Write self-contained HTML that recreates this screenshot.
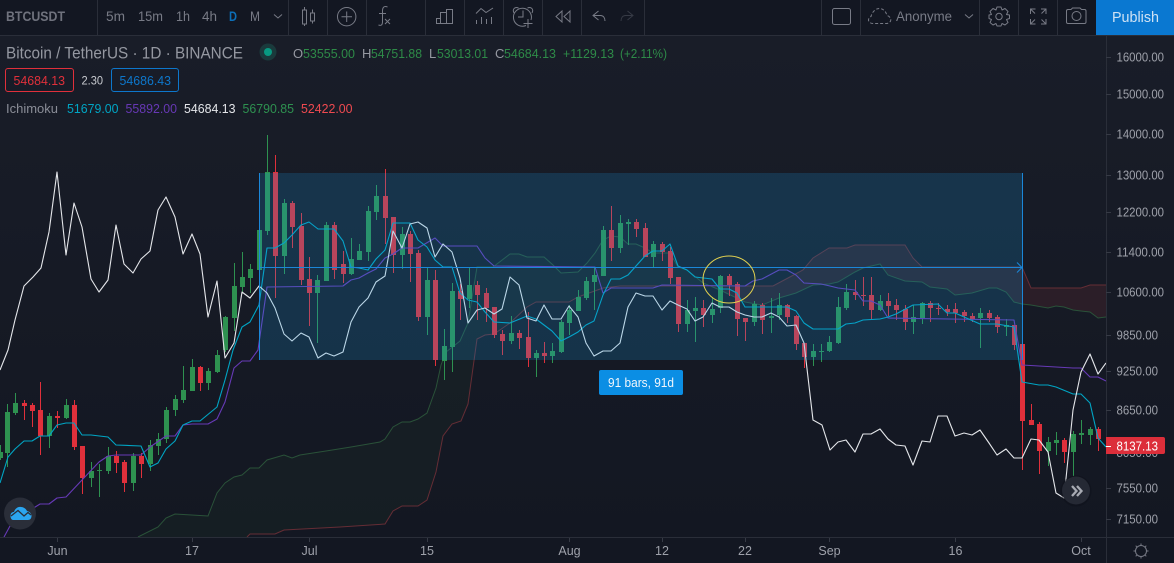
<!DOCTYPE html>
<html><head><meta charset="utf-8"><style>
html,body{margin:0;padding:0;background:#131722;width:1174px;height:563px;overflow:hidden}
svg{display:block;font-family:"Liberation Sans",sans-serif}
</style></head><body>
<svg width="1174" height="563" viewBox="0 0 1174 563" xmlns="http://www.w3.org/2000/svg">
<defs>
<linearGradient id="bg" x1="0" y1="0" x2="0" y2="1"><stop offset="0" stop-color="#191d28"/><stop offset="1" stop-color="#131722"/></linearGradient>
<clipPath id="ch"><rect x="0" y="36" width="1106" height="501"/></clipPath>
</defs>
<rect width="1174" height="563" fill="#131722"/>
<rect x="0" y="36" width="1174" height="501" fill="url(#bg)"/>

<g clip-path="url(#ch)">
<!-- cloud -->
<polygon fill="#4caf50" fill-opacity=".045" points="138,537 158,527 166,518 175,514 208,516 217,493 225,483 234,477 242,475 250,468 259,468 267,460 284,455 292,458 300,455 326,451 351,447 380,442 385,439 393,427 402,422 410,422 418,419 427,413 436,388 441,365 446,352 460,341 468,323 477,267 493,267 510,254 519,254 527,257 544,257 553,265 561,273 578,272 587,263 595,253 603,240 611,236 620,237 628,244 636,244 645,248 653,253 670,253 678,267 687,270 697,278 703,283 711,286 620,286 603,288 578,297 569,302 536,302 527,307 510,323 494,334 485,335 477,339 468,404 461,421 452,424 443,436 436,472 427,500 418,506 402,506 393,511 385,524 340,527 284,530 275,534 250,534 247,537"/>
<polygon fill="#ff5252" fill-opacity=".09" points="711,286 773,286 788,278 803,270 813,258 829,248 847,248 855,245 905,245 913,258 922,267 1022,267 1031,288 1081,288 1090,285 1106,285 1106,317 1098,318 1090,312 1081,311 1073,310 1064,307 1056,306 1048,308 1031,305 1022,304 1014,302 1006,292 997,288 989,288 972,293 955,295 947,289 930,287 922,282 905,281 888,275 880,264 863,268 855,272 838,282 829,284 813,285 796,293 779,298 762,305 745,302 720,290"/>
<polyline fill="none" stroke="#2a5239" stroke-width="1" points="138,537 158,527 166,518 175,514 208,516 217,493 225,483 234,477 242,475 250,468 259,468 267,460 284,455 292,458 300,455 326,451 351,447 380,442 385,439 393,427 402,422 410,422 418,419 427,413 436,388 441,365 446,352 460,341 468,323 477,267 493,267 510,254 519,254 527,257 544,257 553,265 561,273 578,272 587,263 595,253 603,240 611,236 620,237 628,244 636,244 645,248 653,253 670,253 678,267 687,270 697,278 703,283 720,290 745,302 762,305 779,298 796,293 813,285 829,284 838,282 855,272 863,268 880,264 888,275 905,281 922,282 930,287 947,289 955,295 972,293 989,288 997,288 1006,292 1014,302 1022,304 1031,305 1048,308 1056,306 1064,307 1073,310 1081,311 1090,312 1098,318 1106,317"/>
<polyline fill="none" stroke="#652d35" stroke-width="1" points="247,537 250,534 275,534 284,530 340,527 385,524 393,511 402,506 418,506 427,500 436,472 443,436 452,424 461,421 468,404 477,339 485,335 494,334 510,323 527,307 536,302 569,302 578,297 603,288 620,286 773,286 788,278 803,270 813,258 829,248 847,248 855,245 905,245 913,258 922,267 1022,267 1031,288 1081,288 1090,285 1106,285"/>

<!-- candles -->
<g shape-rendering="crispEdges" fill="none">
<path stroke="#2e9150" stroke-width="1" d="M.5 445V460M7.5 404V467M15.5 393V415M49.5 413V448M66.5 399V419M91.5 462V487M99.5 464V497M108.5 447V474M133.5 453V491M150.5 440V471M158.5 433V455M166.5 407V443M175.5 395V416M183.5 366V403M192.5 359V391M208.5 368V390M217.5 350V373M225.5 316V352M234.5 263V331M242.5 252V293M250.5 264V293M259.5 230V270M267.5 135V235M284.5 199V274M317.5 275V343M326.5 222V281M351.5 238V275M359.5 244V260M368.5 206V261M376.5 185V220M402.5 227V269M427.5 268V335M444.5 329V380M452.5 283V372M469.5 268V308M511.5 316V344M536.5 350V377M552.5 343V363M561.5 320V353M569.5 305V335M578.5 290V311M586.5 277V300M594.5 268V310M603.5 226V276M620.5 215V253M628.5 219V245M653.5 241V267M687.5 300V332M695.5 297V342M712.5 297V323M720.5 275V313M754.5 301V326M771.5 298V333M779.5 293V320M813.5 344V366M821.5 344V362M829.5 336V352M838.5 297V344M846.5 284V310M880.5 295V311M913.5 305V334M922.5 302V324M980.5 308V348M1006.5 319V336M1048.5 437V466M1056.5 432V455M1073.5 431V476M1081.5 420V444M1090.5 427V445"/>
<path stroke="#2e9150" stroke-width="5" d="M.5 452V458M7.5 412V453M15.5 403V413M49.5 416V436M66.5 405V418M91.5 471V478M108.5 456V471M133.5 456V483M150.5 445V464M158.5 439V446M166.5 410V439M175.5 399V410M183.5 390V400M192.5 367V391M208.5 371V383M217.5 355V372M225.5 317V350M234.5 286V318M242.5 277V287M250.5 269V278M259.5 230V270M267.5 172V231M284.5 203V256M317.5 280V293M326.5 225V281M351.5 259V274M359.5 251V260M368.5 211V252M376.5 196V212M402.5 234V255M427.5 280V317M444.5 346V361M452.5 291V347M469.5 285V299M511.5 333V341M536.5 353V358M552.5 351V356M561.5 322V352M569.5 310V323M578.5 297V311M586.5 281V298M594.5 275V282M603.5 230V276M620.5 223V248M628.5 222V224M653.5 244V257M687.5 310V324M695.5 308V311M712.5 309V315M720.5 276V308M754.5 304V322M771.5 316V318M779.5 305V315M813.5 351V357M821.5 351V352M829.5 342V351M838.5 307V343M846.5 292V308M880.5 301V310M913.5 317V322M922.5 303V318M980.5 313V318M1006.5 325V327M1048.5 442V451M1056.5 440V443M1073.5 434V452M1081.5 433V435M1090.5 429V435M99.5 470V471"/>
<path stroke="#e0303b" stroke-width="1" d="M24.5 400V420M32.5 403V427M40.5 382V455M57.5 411V428M74.5 400V450M82.5 446V494M116.5 451V473M124.5 460V492M141.5 453V478M200.5 366V391M275.5 155V298M292.5 201V248M301.5 213V285M309.5 257V326M334.5 222V279M343.5 251V283M385.5 169V244M393.5 217V273M410.5 231V282M418.5 250V321M435.5 270V366M460.5 284V320M477.5 281V320M486.5 288V322M494.5 307V338M502.5 330V355M519.5 330V349M528.5 312V367M544.5 342V363M611.5 206V261M636.5 219V237M645.5 223V257M662.5 242V261M670.5 247V284M678.5 277V332M703.5 300V327M729.5 274V296M737.5 282V336M745.5 318V341M762.5 303V334M787.5 304V323M796.5 315V350M804.5 343V368M855.5 280V300M863.5 277V306M871.5 277V319M888.5 293V316M896.5 299V320M905.5 305V330M930.5 301V322M938.5 303V315M947.5 305V316M955.5 303V323M964.5 310V322M972.5 313V322M989.5 310V322M997.5 315V333M1014.5 325V350M1022.5 344V470M1031.5 404V425M1039.5 422V474M1064.5 438V463M1098.5 427V451"/>
<path stroke="#e0303b" stroke-width="5" d="M24.5 403V406M32.5 405V411M40.5 410V436M57.5 416V418M74.5 405V447M82.5 446V478M116.5 456V463M124.5 462V483M141.5 456V464M200.5 367V383M275.5 172V256M292.5 203V227M301.5 226V280M309.5 279V293M334.5 225V270M343.5 264V274M385.5 196V218M393.5 217V255M410.5 234V254M418.5 253V317M435.5 280V360M460.5 291V299M477.5 285V295M486.5 293V308M494.5 307V335M502.5 334V341M519.5 333V338M528.5 337V358M544.5 353V356M611.5 230V248M636.5 222V229M645.5 228V257M662.5 244V252M670.5 251V278M678.5 277V324M703.5 308V315M729.5 276V285M737.5 284V319M745.5 318V322M762.5 305V320M787.5 305V317M796.5 316V344M804.5 343V357M855.5 292V295M863.5 295V296M871.5 295V310M888.5 301V306M896.5 305V310M905.5 309V322M930.5 303V308M938.5 308V309M947.5 309V312M955.5 309V313M964.5 312V316M972.5 316V319M989.5 313V318M997.5 317V327M1014.5 325V345M1022.5 344V421M1031.5 420V425M1039.5 424V451M1064.5 440V452M1098.5 429V439"/>
</g>

<!-- base line (purple) -->
<polyline fill="none" stroke="#673ab7" stroke-width="1.1" stroke-linejoin="round" points="4,537 10,526 24,514 40,504 49,504 57,498 66,497 99,462 108,456 116,455 141,455 150,447 166,436 175,436 183,425 192,424 208,424 217,419 225,402 234,368 242,361 250,361 258,350 267,287 343,286 351,280 359,278 368,273 376,269 385,258 393,254 402,248 418,248 435,238 443,246 477,246 485,258 494,266 595,267 603,293 611,288 653,288 662,285 745,286 753,281 762,279 779,270 787,270 796,275 804,283 821,284 830,286 838,288 855,290 863,301 871,301 880,305 888,318 1014,320 1022,365 1039,366 1073,368 1081,368 1090,377 1098,377 1106,381"/>
<!-- conversion line (teal) -->
<polyline fill="none" stroke="#00a5c4" stroke-width="1.1" stroke-linejoin="round" points="0,483 8,457 15,449 24,441 32,441 40,436 49,436 57,425 66,423 74,423 82,435 91,435 108,437 116,445 141,446 150,467 158,463 166,449 175,441 183,425 192,421 200,421 217,407 225,380 233,350 242,327 250,322 259,305 267,248 275,248 284,243 292,235 301,225 309,222 318,229 334,229 343,241 351,267 359,268 368,270 376,259 385,250 393,223 410,223 418,240 427,247 435,260 443,267 452,267 460,293 468,300 477,302 485,312 494,322 510,323 527,316 536,319 544,325 552,331 561,341 569,337 578,332 586,325 594,321 603,295 611,279 620,279 628,275 636,266 645,256 653,251 662,251 670,244 678,266 687,270 695,277 712,279 720,289 729,289 737,293 745,307 787,307 796,311 804,323 813,329 838,329 846,324 855,323 863,320 880,319 888,317 896,314 913,305 938,304 947,313 955,313 980,324 997,324 1014,327 1022,382 1039,385 1048,385 1056,387 1073,394 1081,394 1090,403 1098,438 1106,447"/>
<!-- lagging line (white) -->
<polyline fill="none" stroke="#e4e6ea" stroke-width="1.1" stroke-linejoin="round" points="0,370 8,350 15,320 24,286 33,277 41,268 49,232 57,172 66,255 74,203 82,227 91,279 99,292 108,280 116,225 124,264 133,273 141,259 150,251 158,210 166,197 175,217 183,254 192,234 200,254 208,317 217,281 225,358 234,343 242,292 250,298 259,286 267,293 275,308 284,334 292,341 301,333 309,337 318,358 326,353 334,356 343,352 351,322 359,307 368,298 376,282 385,276 393,231 402,248 410,224 418,222 427,228 435,257 443,244 452,252 460,278 468,323 477,310 485,308 494,314 502,309 510,277 519,285 527,318 536,321 544,305 552,319 561,319 569,306 578,317 586,343 594,356 603,351 611,351 620,343 628,307 636,293 645,296 653,296 662,310 670,301 678,305 687,309 695,321 703,317 712,303 720,307 729,307 737,312 745,315 754,317 762,317 771,313 779,317 787,326 796,325 804,343 813,420 822,425 830,450 838,442 846,440 855,452 863,434 871,434 880,429 888,439 896,445 905,446 913,465 922,441 930,442 938,416 947,416 955,436 964,433 972,435 980,430 989,443 997,455 1006,449 1014,458 1022,458 1031,439 1039,440 1048,452 1056,493 1064,498 1073,410 1081,372 1090,354 1098,374 1106,363"/>
</g>

<!-- measure rect -->
<rect x="259" y="173" width="764" height="187" fill="#1a9ae0" fill-opacity=".2"/>
<g shape-rendering="crispEdges" stroke="#1b87d8" stroke-width="1" fill="none">
<path d="M259.5 173V360M1022.5 173V360M259.5 267.5H1022"/>
</g>
<path d="M1017 262.5L1022 267.5L1017 272.5" fill="none" stroke="#1b87d8" stroke-width="1"/>
<rect x="599" y="370" width="84" height="25" rx="2" fill="#0b8ee4"/>
<text x="608" y="387" font-size="13" fill="#f0f6fc" textLength="66" lengthAdjust="spacingAndGlyphs">91 bars, 91d</text>

<!-- ellipse -->
<ellipse cx="729" cy="279.500" rx="26" ry="23.500" fill="none" stroke="#e3d24f" stroke-width="1"/>

<!-- toolbar -->
<rect x="0" y="0" width="1174" height="35" fill="#131722"/>
<g shape-rendering="crispEdges" stroke="#2a2e39" stroke-width="1" fill="none">
<path d="M0 35.500H1174M97.500 0V35M288.500 0V35M327.500 0V35M366.500 0V35M425.500 0V35M464.500 0V35M503.500 0V35M542.500 0V35M581.500 0V35M644.500 0V35M821.500 0V35M860.500 0V35M979.500 0V35M1018.500 0V35M1057.500 0V35"/>
<path d="M1106.500 36V563M0 537.500H1174"/>
</g>
<rect x="1096" y="0" width="78" height="35" fill="#0a78d1"/>
<text x="1112" y="22" font-size="15" fill="#cfe2f4" textLength="47" lengthAdjust="spacingAndGlyphs">Publish</text>

<g font-size="13.500" fill="#787b86">
<text x="6" y="21" font-size="13.500" font-weight="bold" fill="#6f727d" textLength="59" lengthAdjust="spacingAndGlyphs">BTCUSDT</text>
<text x="106" y="21" textLength="19" lengthAdjust="spacingAndGlyphs">5m</text>
<text x="138" y="21" textLength="25" lengthAdjust="spacingAndGlyphs">15m</text>
<text x="176" y="21" textLength="14" lengthAdjust="spacingAndGlyphs">1h</text>
<text x="202" y="21" textLength="15" lengthAdjust="spacingAndGlyphs">4h</text>
<text x="229" y="21" fill="#0d6fb8" font-weight="bold" textLength="8" lengthAdjust="spacingAndGlyphs">D</text>
<text x="250" y="21" textLength="10" lengthAdjust="spacingAndGlyphs">M</text>
<text x="896" y="21" textLength="56" lengthAdjust="spacingAndGlyphs">Anonyme</text>
</g>

<!-- toolbar icons -->
<g fill="none" stroke="#787b86" stroke-width="1">
<path d="M274 14.500L278 18L282 14.500"/>
<path d="M965 14.500L969 18L973 14.500"/>
<path d="M304.500 7V10M304.500 24V26M302.500 10H306.500V24H302.500ZM312.500 9.500V13M312.500 21V23.500M310.500 13H314.500V21H310.500Z"/>
<circle cx="346.700" cy="16.700" r="9.200"/>
<path d="M346.700 11.500V22M341.500 16.700H352"/>
<path d="M387.500 7C384 5.500 382.500 7.500 382.500 11V22C382.500 25 381 26 378.500 25M379 13.500H386M385 19L390 24M390 19L385 24"/>
<path d="M436.500 23.500V18.500H440.500V23.500ZM440.500 23.500V12.500H446.500V23.500M446.500 23.500V9.500H452.500V23.500ZM436.500 23.500H452.500"/>
<path d="M476 13.500L481 8.500L486 12.500L493 8M476.500 24V20M481.500 24V17M486.500 24V19M491.500 24V17"/>
<path d="M531 20A9 9 0 1 0 526 25.500M523 10.500V17H518M514 13C512 9 515 6.500 518.500 8M532 13C534 9 531 6.500 527.500 8M528 19V28M523.500 23.500H532.500"/>
<path d="M562 11L556 16.500L562 22ZM570 11L564 16.500L570 22Z"/>
<path d="M598.500 11L593 15.500L598.500 20M593 15.500H600.500C603.500 15.500 605 18 605 21"/>
<path d="M627.500 11L633 15.500L627.500 20M633 15.500H625.500C622.500 15.500 621 18 621 21" stroke="#363a45"/>
<rect x="832.500" y="8.500" width="18" height="16" rx="2"/>
<path d="M873 23.500C868 23.500 867 18.500 871 16.500C872 12 876 8 880 8.500C884 9 886 12 887 15.500C891 16.500 893 22 887 23.500Z" stroke-dasharray="3 2"/>
<circle cx="999" cy="16.500" r="3.200"/>
<path d="M997 7H1001L1002 10L1005 8.500L1008 11.500L1006.500 14.500L1009.500 15V18.500L1006.500 19.500L1008 22.500L1005 25L1002 23.500L1001 26H997L996 23.500L993 25L990 22.500L991.500 19.500L989 18.500V15L991.500 14.500L990 11.500L993 8.500L996 10Z" stroke-linejoin="round"/>
<path d="M1030.500 14V9H1035.500M1030.500 9L1035 13.500M1046 14V9H1041M1046 9L1041.500 13.500M1030.500 19V24H1035.500M1030.500 24L1035 19.500M1046 19V24H1041M1046 24L1041.500 19.500"/>
<path d="M1066.500 11C1066.500 10 1067 9.500 1068 9.500H1071L1072.500 8H1080L1081.500 9.500H1084.500C1085.500 9.500 1086 10 1086 11V22C1086 23 1085.500 23.500 1084.500 23.500H1068C1067 23.500 1066.500 23 1066.500 22Z"/>
<circle cx="1076.500" cy="16" r="4.500"/>
</g>

<!-- legend -->
<text x="6" y="58.500" font-size="16.500" fill="#9598a1" textLength="237" lengthAdjust="spacingAndGlyphs">Bitcoin / TetherUS · 1D · BINANCE</text>
<circle cx="268" cy="52" r="8.500" fill="#1a3a3c"/>
<circle cx="268" cy="52" r="4" fill="#089981"/>
<g font-size="13" fill="#2e8b48">
<text x="293" y="58" fill="#9598a1">O</text><text x="303" y="58" textLength="52" lengthAdjust="spacingAndGlyphs">53555.00</text>
<text x="362" y="58" fill="#9598a1">H</text><text x="371" y="58" textLength="51" lengthAdjust="spacingAndGlyphs">54751.88</text>
<text x="429" y="58" fill="#9598a1">L</text><text x="437" y="58" textLength="51" lengthAdjust="spacingAndGlyphs">53013.01</text>
<text x="495" y="58" fill="#9598a1">C</text><text x="504" y="58" textLength="52" lengthAdjust="spacingAndGlyphs">54684.13</text>
<text x="563" y="58" textLength="51" lengthAdjust="spacingAndGlyphs">+1129.13</text>
<text x="620" y="58" textLength="47" lengthAdjust="spacingAndGlyphs">(+2.11%)</text>
</g>
<rect x="5.500" y="68.500" width="68" height="23" rx="2.500" fill="none" stroke="#e0303b"/>
<text x="13.500" y="85" font-size="13" fill="#e0303b" textLength="51.500" lengthAdjust="spacingAndGlyphs">54684.13</text>
<text x="81.500" y="84.500" font-size="12" fill="#c8cad0" textLength="21.500" lengthAdjust="spacingAndGlyphs">2.30</text>
<rect x="111.500" y="68.500" width="67" height="23" rx="2.500" fill="none" stroke="#0d77cc"/>
<text x="119.500" y="85" font-size="13" fill="#0d77cc" textLength="51.500" lengthAdjust="spacingAndGlyphs">54686.43</text>
<g font-size="13">
<text x="6" y="113" fill="#8a8d97" textLength="52" lengthAdjust="spacingAndGlyphs">Ichimoku</text>
<text x="67" y="113" fill="#00a5c4" textLength="51.500" lengthAdjust="spacingAndGlyphs">51679.00</text>
<text x="125.500" y="113" fill="#6738b5" textLength="51.500" lengthAdjust="spacingAndGlyphs">55892.00</text>
<text x="184" y="113" fill="#e4e6ea" textLength="51.500" lengthAdjust="spacingAndGlyphs">54684.13</text>
<text x="242.500" y="113" fill="#2e9150" textLength="51.500" lengthAdjust="spacingAndGlyphs">56790.85</text>
<text x="301" y="113" fill="#ef4a50" textLength="51.500" lengthAdjust="spacingAndGlyphs">52422.00</text>
</g>

<!-- price axis -->
<g shape-rendering="crispEdges" stroke="#363a45" fill="none">
<path d="M1106 57.500H1111M1106 94.500H1111M1106 134.500H1111M1106 175.500H1111M1106 212.500H1111M1106 252.500H1111M1106 292.500H1111M1106 335.500H1111M1106 371.500H1111M1106 410.500H1111M1106 488.500H1111M1106 519.500H1111"/>
<path d="M57.500 538V542M192.500 538V542M309.500 538V542M427.500 538V542M569.500 538V542M662.500 538V542M745.500 538V542M829.500 538V542M955.500 538V542M1081.500 538V542"/>
</g>
<g font-size="13" fill="#9ea1aa">
<text x="1116.500" y="61.500" textLength="47.500" lengthAdjust="spacingAndGlyphs">16000.00</text>
<text x="1116.500" y="98.500" textLength="47.500" lengthAdjust="spacingAndGlyphs">15000.00</text>
<text x="1116.500" y="138.500" textLength="47.500" lengthAdjust="spacingAndGlyphs">14000.00</text>
<text x="1116.500" y="179.500" textLength="47.500" lengthAdjust="spacingAndGlyphs">13000.00</text>
<text x="1116.500" y="216.500" textLength="47.500" lengthAdjust="spacingAndGlyphs">12200.00</text>
<text x="1116.500" y="256.500" textLength="47.500" lengthAdjust="spacingAndGlyphs">11400.00</text>
<text x="1116.500" y="296.500" textLength="47.500" lengthAdjust="spacingAndGlyphs">10600.00</text>
<text x="1116.500" y="339.500" textLength="41.500" lengthAdjust="spacingAndGlyphs">9850.00</text>
<text x="1116.500" y="375.500" textLength="41.500" lengthAdjust="spacingAndGlyphs">9250.00</text>
<text x="1116.500" y="414.500" textLength="41.500" lengthAdjust="spacingAndGlyphs">8650.00</text>
<text x="1116.500" y="457" textLength="41.500" lengthAdjust="spacingAndGlyphs">8050.00</text>
<text x="1116.500" y="492.500" textLength="41.500" lengthAdjust="spacingAndGlyphs">7550.00</text>
<text x="1116.500" y="523.500" textLength="41.500" lengthAdjust="spacingAndGlyphs">7150.00</text>
</g>
<path d="M1106 437H1163Q1165 437 1165 439V452Q1165 454 1163 454H1106Z" fill="#dc2e3a"/>
<path d="M1106 446.500H1111" stroke="#fff" shape-rendering="crispEdges"/>
<text x="1116.500" y="450.500" font-size="13" fill="#fff" textLength="41.500" lengthAdjust="spacingAndGlyphs">8137.13</text>

<!-- time axis -->
<g font-size="12.500" fill="#9ea1aa" text-anchor="middle">
<text x="57.500" y="555">Jun</text>
<text x="192" y="555">17</text>
<text x="309.500" y="555">Jul</text>
<text x="427" y="555">15</text>
<text x="569.500" y="555">Aug</text>
<text x="662" y="555">12</text>
<text x="745" y="555">22</text>
<text x="829.500" y="555">Sep</text>
<text x="955.500" y="555">16</text>
<text x="1081" y="555">Oct</text>
</g>
<g fill="none" stroke="#787b86">
<circle cx="1141" cy="551" r="5.500"/>
<path d="M1141 543.500V545M1141 557V558.500M1133.500 551H1135M1147 551H1148.500M1135.700 545.700L1136.800 546.800M1145.200 555.200L1146.300 556.300M1146.300 545.700L1145.200 546.800M1136.800 555.200L1135.700 556.300"/>
</g>

<!-- logo -->
<circle cx="20" cy="513.500" r="16" fill="#2a2e39"/>
<path d="M10.500 516C10.500 513 12 512 14 512C15 508.500 18 506.500 21 507C24 507 26 509 27 511C30 511.500 31.500 514 31.500 516C31.500 518.500 30 520 28 520H13C11.500 520 10.500 518 10.500 516Z" fill="#2ba5ef"/>
<path d="M11 516L18 510.500L24 516L28 512.500L31 515" fill="none" stroke="#2a2e39" stroke-width="1.300"/>

<!-- scroll button -->
<circle cx="1076" cy="491" r="15.500" fill="#0d1018" fill-opacity=".45"/>
<circle cx="1076" cy="490.500" r="14" fill="#252934"/>
<path d="M1072 486L1076.500 491L1072 496M1077 486L1081.500 491L1077 496" fill="none" stroke="#a8abb3" stroke-width="2.300"/>
</svg>
</body></html>
